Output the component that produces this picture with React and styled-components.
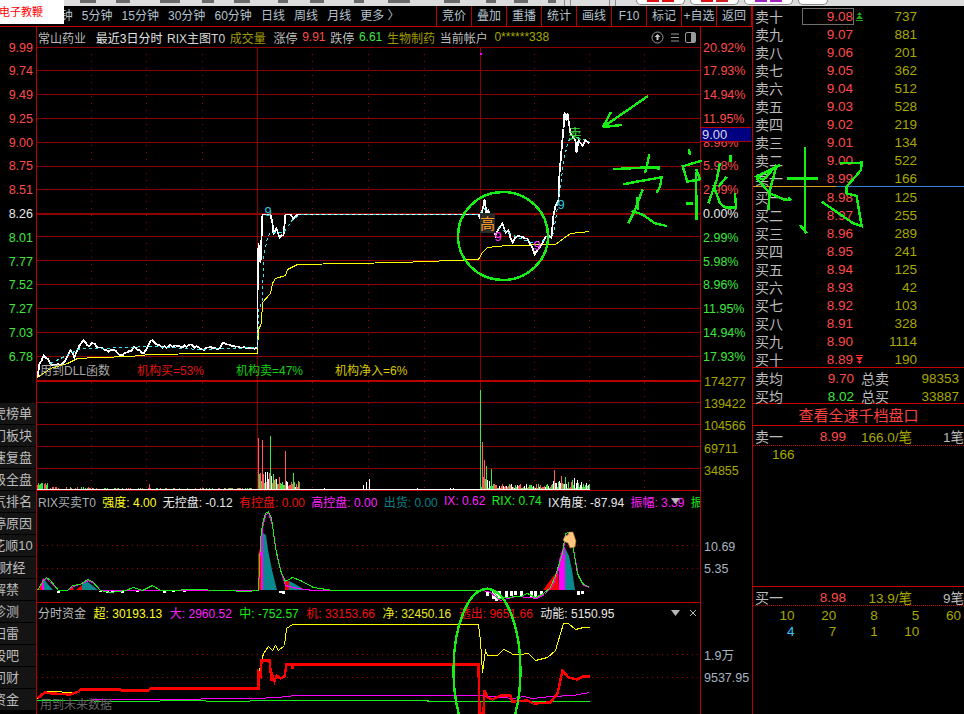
import React from 'react'
import styled, { createGlobalStyle } from 'styled-components'

const RED = '#ff4b4b'
const GREEN = '#3fe63f'
const OLIVE = '#a8a800'
const GREY = '#bcbcbc'
const LINE = '#8c0000'
const EDGE = '#b80000'
const INK = '#16ee16'

const GlobalStyle = createGlobalStyle`
  html, body { margin: 0; padding: 0; background: #000; }
  * { box-sizing: border-box; }
`

const Page = styled.div`
  position: relative;
  width: 964px;
  height: 714px;
  overflow: hidden;
  background: #000;
  color: ${GREY};
  font-family: "Liberation Sans", "Noto Sans CJK SC", sans-serif;
  display: flex;
  flex-direction: column;
`

/* strip of the window above, mostly cut off */
const TopStrip = styled.div`
  height: 6px;
  flex: none;
  display: flex;
  background: #dcdcdc;
  padding-left: 64px;
  overflow: hidden;
`
const TopMark = styled.i`
  display: block;
  flex: none;
  height: ${p => p.$h || 3}px;
  width: ${p => p.$w}px;
  margin-left: ${p => p.$gap}px;
  background: ${p => p.$c || '#6a6a6a'};
`
const TopTab = styled.div`
  flex: none;
  width: ${p => p.$w || 49}px;
  height: 5px;
  margin-left: ${p => p.$gap || 5}px;
  padding: 0 10px;
  display: flex;
  gap: 3px;
  background: #fff;
  border: 1px solid #8a8a8a;
  border-top: 0;
  border-radius: 0 0 6px 6px;
`
const TabInk = styled.i`
  flex: 1;
  height: 2px;
  background: ${p => p.$c};
`

const Workspace = styled.div`
  flex: 1;
  display: flex;
  min-height: 0;
`
const LeftArea = styled.div`
  width: 752px;
  flex: none;
  display: flex;
  flex-direction: column;
`

const Toolbar = styled.div`
  height: 21px;
  flex: none;
  display: flex;
  justify-content: space-between;
  border-bottom: 1px solid #c80000;
  font-size: 12px;
  line-height: 20px;
  color: #b4c0cc;
  white-space: nowrap;
`
const Periods = styled.div`
  display: flex;
  gap: 9.1px;
  padding-left: 42px;
`
const Actions = styled.div`
  display: flex;
`
const ActionButton = styled.div`
  width: 35px;
  text-align: center;
  border-left: 1px solid #b80000;
  &:last-child { border-right: 1px solid #b80000; width: 36px; }
`

const ChartBody = styled.div`
  flex: 1;
  display: flex;
  min-height: 0;
`
const Gutter = styled.div`
  width: 36px;
  flex: none;
  padding-top: 9.5px;
  overflow: hidden;
  display: flex;
  flex-direction: column;
`
const PriceTick = styled.div`
  height: 23.8px;
  flex: none;
  line-height: 23.8px;
  text-align: right;
  padding-right: 3px;
  font-size: 12.5px;
  color: ${p => p.$c};
`
const Tabs = styled.div`
  margin-top: 33px;
  display: flex;
  flex-direction: column;
  gap: 1px;
`
const Tab = styled.div`
  height: 21px;
  flex: none;
  background: #141414;
  font-size: 13px;
  line-height: 21px;
  color: ${GREY};
`
const TabLabel = styled.div`
  width: 12px;
  display: flex;
  justify-content: center;
  white-space: nowrap;
`

const Plots = styled.div`
  width: 665px;
  flex: none;
  display: flex;
  flex-direction: column;
  border-left: 1px solid ${EDGE};
  border-right: 1px solid ${EDGE};
`
const Panel = styled.section`
  position: relative;
  flex: none;
  height: ${p => p.$h}px;
  overflow: hidden;
  border-bottom: ${p => p.$edge || 0}px solid ${EDGE};
`
const PanelHead = styled.div`
  height: ${p => p.$h || 20}px;
  display: flex;
  align-items: center;
  gap: ${p => p.$gap || 5}px;
  padding: 0 1px;
  font-size: 12px;
  white-space: nowrap;
  overflow: hidden;
`
const Text = styled.span`
  flex: none;
  color: ${p => p.$c || GREY};
  margin-left: ${p => p.$ml || 0}px;
`
const HeadTools = styled.div`
  position: absolute;
  top: ${p => p.$top}px;
  right: ${p => p.$right}px;
  display: flex;
  align-items: center;
  gap: ${p => p.$gap}px;
  color: #b8b8b8;
`
const DllRow = styled.div`
  position: absolute;
  left: 3px;
  top: 336px;
  display: flex;
  font-size: 12px;
  line-height: 16px;
  white-space: nowrap;
`
const DllText = styled.span`
  color: ${p => p.$c};
  width: ${p => p.$w}px;
  flex: none;
`
const FutureNote = styled.div`
  position: absolute;
  left: 3px;
  bottom: 2px;
  font-size: 12px;
  color: #666;
`
const PlotSvg = styled.svg`
  display: block;
`

const AxisColumn = styled.div`
  flex: none;
  width: 50px;
  padding-top: 9.5px;
  display: flex;
  flex-direction: column;
  align-items: stretch;
`
const AxisTick = styled.div`
  position: relative;
  flex: none;
  height: ${p => p.$h}px;
  line-height: ${p => p.$h}px;
  padding-left: ${p => p.$pad || 2}px;
  font-size: 12.5px;
  white-space: nowrap;
  color: ${p => p.$c};
`
const AxisGap = styled.div`
  flex: none;
  height: ${p => p.$h}px;
`
const LastPrice = styled.div`
  position: absolute;
  left: 0;
  top: -5px;
  width: 50px;
  height: 15px;
  line-height: 13px;
  padding-left: 1px;
  background: #000080;
  color: #d8d8e8;
  font-size: 13px;
  border-top: 1px solid ${EDGE};
  border-bottom: 1px solid ${EDGE};
`

const Book = styled.aside`
  flex: 1;
  display: flex;
  flex-direction: column;
  border-left: 1px solid ${EDGE};
  font-size: 13.5px;
  white-space: nowrap;
`
const BookRow = styled.div`
  height: 18px;
  flex: none;
  display: grid;
  grid-template-columns: 47px 52px 10px 53px;
  align-items: center;
  padding: 0 0 2px 2px;
`
const BookLabel = styled.span`
  font-size: 14px;
  color: ${GREY};
`
const BookPrice = styled.span`
  height: 17px;
  line-height: 15px;
  text-align: right;
  color: ${RED};
  border: 1px solid ${p => (p.$boxed ? '#6f6f6f' : 'transparent')};
`
const BookVolume = styled.span`
  text-align: right;
  color: ${OLIVE};
`
const Mid = styled.div`
  height: 1px;
  flex: none;
  background: linear-gradient(90deg, #e09a20 0, #e09a20 83px, #2f86d8 83px);
`
const Summary = styled.div`
  height: 37px;
  flex: none;
  border-top: 1px solid #c80000;
  border-bottom: 1px solid #c80000;
`
const SummaryRow = styled.div`
  height: 18px;
  display: grid;
  grid-template-columns: 47px 52px 7px 30px 68px;
  align-items: center;
  padding: 0 0 2px 2px;
`
const SummaryValue = styled.span`
  text-align: right;
  color: ${p => p.$c};
`
const SummaryLabel = styled(BookLabel)`
  grid-column: 4;
`
const FullDepth = styled.div`
  height: 22px;
  flex: none;
  border-bottom: 1px solid #c80000;
  text-align: center;
  font-size: 15px;
  line-height: 22px;
  padding-top: 1px;
  color: #ff4040;
`
const TickRow = styled.div`
  height: 20px;
  flex: none;
  display: grid;
  grid-template-columns: 47px 44px 66px 52px;
  align-items: center;
  padding: 0 0 1px 2px;
  border-top: ${p => (p.$ruled ? '1px solid #c80000' : '0')};
  border-bottom: 1px dotted #c80000;
`
const TickCell = styled.span`
  text-align: right;
  color: ${p => p.$c};
`
const QueueRow = styled.div`
  height: ${p => p.$h || 15}px;
  flex: none;
  display: grid;
  grid-template-columns: repeat(5, 41.6px);
`
const QueueCell = styled.span`
  text-align: right;
  line-height: 15px;
  color: ${p => p.$c || OLIVE};
`
const BookSpacer = styled.div`
  flex: none;
  height: ${p => p.$h}px;
`

/* watermark and hand drawn marks on top of the whole window */
const Badge = styled.div`
  position: absolute;
  left: 0;
  top: 0;
  width: 64px;
  height: 24px;
  background: #fff;
  color: #f00;
  font-size: 11px;
  line-height: 24px;
  white-space: nowrap;
  text-indent: -1px;
`
const InkLayer = styled.svg`
  position: absolute;
  left: 0;
  top: 0;
  pointer-events: none;
`

const line = pts => pts.map(p => p.join(',')).join(' ')

const noise = i => {
  const s = Math.sin(i * 12.9898) * 43758.5453
  return s - Math.floor(s)
}

// fills the flat stretches of a trace with small tick movements
const roughen = (pts, ranges, amp) => {
  const out = []
  pts.forEach((p, i) => {
    const next = pts[i + 1]
    out.push(p)
    if (!next) return
    const busy = ranges.some(([a, b]) => p[0] >= a && next[0] <= b)
    if (!busy) return
    for (let x = p[0] + 2; x < next[0] - 1; x += 2) {
      const t = (x - p[0]) / (next[0] - p[0])
      out.push([x, +(p[1] + (next[1] - p[1]) * t + (noise(x) - 0.5) * amp).toFixed(1)])
    }
  })
  return out
}

const priceLine = roughen([
  [37,377],[39,363],[43,355],[47,358],[50,363],[55,365],[60,364],[65,360],[70,350],[74,357],[79,345],[83,340],[87,345],[94,343],[98,347],[108,351],[115,350],[122,355],[127,352],[135,347],[143,353],[150,340],[155,343],[162,347],[175,345],[182,347],[190,344],[202,349],[208,347],[220,347],[222,342],[227,344],[240,347],[257,347],
  [257,295],[258,243],[260,262],[262,214],[262,232],[262,214],[270,214],[272,223],[273,233],[276,228],[279,237],[283,235],[285,214],[290,214],[293,218],[297,214],[478,214],
  [480,218],[483,205],[484,199],[486,213],[488,210],[490,222],[495,235],[498,228],[502,223],[505,232],[508,230],[512,242],[515,237],[520,236],[527,238],[532,247],[534,254],[539,247],[542,243],[545,236],[551,237],[553,215],[555,205],[558,200],[559,173],[561,150],[563,128],[564,112],[566,120],[567,113],[570,133],[575,140],[576,152],[578,140],[582,145],[585,140],[589,143],
], [[37, 257], [490, 552], [270, 285]], 3)
const avgLine = [
  [50,363],[80,348],[100,348],[150,346],[200,349],[257,347],[258,310],[262,300],[263,257],[267,237],[270,232],[283,232],[293,218],[302,214],
  [478,214],[484,208],[490,222],[500,228],[515,236],[530,242],[545,240],[553,233],[559,193],[563,162],[567,143],[571,135],[589,141],
]
const avgYellow = [
  [37,377],[50,368],[67,363],[77,358],[97,357],[130,356],[150,354],[207,353],[257,353],[257,350],[258,330],[261,322],[262,302],[270,293],[272,283],[275,278],[285,275],[287,269],[293,266],[297,264],[400,262],[478,259],[482,252],[487,247],[507,245],[555,244],[563,238],[570,233],[589,231],
]

const rixGreen = [
  [37,590],[43,580],[46,577],[50,580],[58,590],[67,590],[72,585],[80,584],[87,579],[92,581],[100,590],[110,592],[125,590],[133,587],[142,590],[152,585],[160,590],[172,590],[190,589],[225,590],[245,591],[258,590],[260,540],[262,523],[265,513],[268,511],[271,518],[275,547],[280,570],[285,581],[292,577],[300,580],[313,587],[333,590],[483,590],[487,587],[492,590],[498,598],[503,597],[520,596],[527,593],[535,597],[543,593],[550,587],[555,575],[562,553],[565,533],[568,532],[572,543],[577,573],[582,583],[589,587],
]
const rixMagenta = [
  [37,590],[42,582],[46,578],[52,584],[58,590],[67,590],[73,586],[82,583],[88,580],[94,583],[100,590],[258,590],[260,545],[262,528],[265,515],[268,512],[272,525],[276,553],[281,573],[285,585],[297,588],[313,590],[483,590],[490,592],[500,600],[515,596],[530,597],[536,598],[544,594],[552,586],[557,573],[563,548],[566,535],[569,533],[573,549],[578,576],[583,585],[589,587],
]
const rixFills = [
  { c: '#f00', pts: [[39,590],[42,581],[43,590]] },
  { c: '#ff00ff', pts: [[42,590],[42,580],[44,578],[44,590]] },
  { c: '#0a8a8f', pts: [[44,590],[44,579],[47,583],[53,590]] },
  { c: '#f00', pts: [[68,590],[72,586],[74,590]] },
  { c: '#f00', pts: [[76,590],[82,585],[82,590]] },
  { c: '#0a8a8f', pts: [[82,590],[82,583],[88,582],[98,590]] },
  { c: '#f00', pts: [[258,590],[258,555],[261,545],[261,590]] },
  { c: '#ff00ff', pts: [[261,590],[261,530],[263,526],[263,590]] },
  { c: '#0a8a8f', pts: [[263,590],[263,533],[266,535],[268,550],[270,560],[272,570],[274,578],[277,590]] },
  { c: '#f00', pts: [[285,590],[285,581],[289,581],[289,590]] },
  { c: '#0a8a8f', pts: [[289,590],[289,581],[295,584],[305,590]] },
  { c: '#f00', pts: [[543,590],[558,570],[559,590]] },
  { c: '#ff00ff', pts: [[559,590],[559,560],[563,547],[565,547],[565,590]] },
  { c: '#0a8a8f', pts: [[565,590],[565,548],[569,556],[572,570],[575,590]] },
]
const rixWhite = [[57,1],[99,0],[106,1],[111,0],[121,1],[136,0],[163,1],[172,0],[183,0],[279,1],[282,2],[486,4],[492,7],[495,9],[498,6],[505,5],[510,4],[514,3],[520,4],[530,5],[534,7],[540,3],[577,3],[581,2]]

const capYellow = [
  [37,698],[45,691],[78,692],[82,688],[120,688],[122,690],[148,690],[150,688],[258,688],[259,670],[263,653],[268,646],[272,650],[275,645],[278,650],[284,645],[286,628],[292,624],[478,624],[480,640],[482,672],[485,650],[487,655],[497,655],[503,649],[510,652],[512,654],[520,654],[528,653],[535,660],[547,657],[555,650],[560,633],[563,623],[568,623],[575,629],[583,627],[589,627],
]
const capRed = [
  [37,698],[44,692],[52,693],[70,694],[78,691],[80,689],[120,689],[121,690],[148,690],[150,688],[258,688],[258,672],[260,675],[261,660],[269,660],[271,680],[272,675],[274,681],[276,675],[280,678],[284,676],[286,664],[292,664],[292,668],[293,664],[478,664],[479,713],[483,713],[484,690],[487,697],[492,699],[500,695],[510,695],[512,701],[527,700],[533,703],[550,702],[557,693],[562,670],[568,677],[577,679],[582,676],[589,676],
]
const capMagenta = [
  [37,700],[257,698],[290,696],[291,695],[478,695],[513,698],[523,696],[532,698],[550,696],[573,695],[589,692],
]
const capGreen = [
  [37,700],[150,701],[170,700],[240,701],[260,700],[590,701],
]

const verticals = [
  { x: 91.5 }, { x: 146.5 }, { x: 202.5 }, { x: 257.5, solid: true }, { x: 312.5 }, { x: 368.5 }, { x: 424.5 },
  { x: 480.5, solid: true }, { x: 534.5 }, { x: 589.5 }, { x: 644.5 },
]
const mainRows = [70, 94, 118, 142, 166, 189, 236, 260, 284, 308, 332, 356]
const volumeRows = [402, 424, 446, 468]

const bars = () => {
  const out = []
  const add = (x, h, c) => out.push({ x, h, c })
  for (let x = 37; x < 258; x++) {
    const n = noise(x)
    const c = noise(x + 500) > 0.5 ? '#ff5a5a' : GREEN
    const boost = x < 50 ? 4 : 0
    if (n > 0.25) add(x, 1 + boost + Math.floor(noise(x + 90) * (x < 90 ? 3 : 1.6)), c)
  }
  for (let x = 258; x < 300; x++) {
    const n = noise(x + 30)
    const c = n > 0.66 ? '#ff5a5a' : n > 0.33 ? GREEN : '#fff'
    add(x, Math.floor(3 + noise(x + 70) * (x < 280 ? 16 : 7)), c)
  }
  for (let x = 300; x < 478; x += 3) {
    if (noise(x + 11) > 0.92) add(x, 2, '#fff')
  }
  ;[[258, 52, '#ff5a5a'], [262, 50, '#ff5a5a'], [270, 54, GREEN], [285, 39, '#ff5a5a'], [293, 17, GREEN], [363, 5, '#fff'], [366, 8, '#fff'], [369, 11, '#fff'], [149, 6, '#ff5a5a']].forEach(b => add(...b))
  for (let x = 481; x < 590; x++) {
    const n = noise(x + 200)
    const c = n > 0.66 ? '#ff5a5a' : n > 0.33 ? GREEN : '#fff'
    const top = x < 492 ? 20 : x > 552 ? 12 : 5
    add(x, Math.floor(2 + noise(x + 300) * top), c)
  }
  ;[[480, 100, GREEN], [482, 48, '#ff5a5a'], [484, 30, '#ff5a5a'], [486, 24, GREEN], [554, 20, '#ff5a5a'], [561, 14, '#ff5a5a']].forEach(b => add(...b))
  return out
}
const volumeBars = bars()

const Chart = ({ top, height, children }) => (
  <PlotSvg width={663} height={height} viewBox={`37 ${top} 663 ${height}`}>
    {children}
  </PlotSvg>
)

const Rows = ({ ys, dotted }) => ys.map(y => (
  <line key={y} x1={37} x2={700} y1={y + 0.5} y2={y + 0.5} stroke={dotted ? '#a00000' : LINE} strokeDasharray={dotted ? '1 4' : undefined} />
))

const Columns = ({ from, to }) => verticals.map(v => (
  <line key={v.x} x1={v.x} x2={v.x} y1={from} y2={to} stroke={v.solid ? LINE : '#a00000'} strokeDasharray={v.solid ? undefined : '1 6'} />
))

const Trace = ({ pts, c, w = 1, dash }) => (
  <polyline points={line(pts)} fill='none' stroke={c} strokeWidth={w} strokeDasharray={dash} shapeRendering='crispEdges' transform='translate(0.5 0.5)' />
)

const Mark = ({ x, y, c, size = 13, children }) => (
  <text x={x} y={y} fill={c} fontSize={size} textAnchor='middle' fontFamily='"Liberation Sans", "Noto Sans CJK SC", sans-serif'>{children}</text>
)

const MainChart = () => (
  <Chart top={47} height={333}>
    <line x1={37} x2={700} y1={47.5} y2={47.5} stroke={LINE} />
    <Rows ys={mainRows} />
    <line x1={37} x2={700} y1={214} y2={214} stroke={LINE} strokeWidth={2} />
    <Columns from={47} to={380} />
    <rect x={480} y={53} width={2} height={2} fill='#ff00ff' />
    <Trace pts={avgYellow} c='#ffff00' />
    <Trace pts={priceLine} c='#fff' w={1.8} />
    <Trace pts={avgLine} c='#35e6f5' dash='3 3' />
    <rect x={480} y={213} width={15} height={20} fill='#2a2a2a' />
    <Mark x={487.5} y={229} c='#ff9a1e' size={15}>高</Mark>
    <Mark x={268} y={216} c='#2fc8e0'>9</Mark>
    <Mark x={561} y={209} c='#2fc8e0'>9</Mark>
    <Mark x={498} y={241} c='#ff40ff'>9</Mark>
    <Mark x={537} y={250} c='#ff40ff'>9</Mark>
    <Mark x={575} y={138} c={GREEN}>卖</Mark>
  </Chart>
)

const VolumeChart = () => (
  <Chart top={382} height={108}>
    <Rows ys={volumeRows} />
    <Columns from={382} to={490} />
    {volumeBars.map((b, i) => (
      <rect key={i} x={b.x} y={490 - b.h} width={1} height={b.h} fill={b.c} />
    ))}
    <rect x={37} y={489} width={553} height={1} fill='#fff' />
  </Chart>
)

const RixChart = () => (
  <Chart top={511} height={91}>
    <Rows ys={[545, 568]} dotted />
    {rixFills.map((f, i) => <polygon key={i} points={line(f.pts)} fill={f.c} />)}
    {rixWhite.map(([x, h]) => <rect key={x} x={x} y={591} width={3} height={h + 1} fill='#fff' />)}
    <Trace pts={rixMagenta} c='#ff00ff' />
    <Trace pts={rixGreen} c='#19ee19' />
    <path d='M563 540l2-4 3-1 1-3 4 0 1 3 2 6-1 6-5 1-2-5-3-1z' fill='#ffc680' stroke='#a86a28' strokeWidth={0.6} />
  </Chart>
)

const CapitalChart = () => (
  <Chart top={622} height={92}>
    <Rows ys={[654, 677]} dotted />
    <Trace pts={capMagenta} c='#ff00ff' />
    <Trace pts={capGreen} c='#19ee19' />
    <Trace pts={capYellow} c='#ffff00' />
    <Trace pts={capRed} c='#f00' w={2.5} />
  </Chart>
)

const PanelIcons = () => (
  <svg width='46' height='13' viewBox='0 0 46 13' fill='none' stroke='#9a9a9a'>
    <circle cx='6.5' cy='6.5' r='5.5' />
    <path d='M6.5 3l3 3h-2v3h-2v-3h-2z' fill='#c8c8c8' stroke='none' />
    <path d='M20 3h8M20 6.5h8M20 10h8' />
    <rect x='34.5' y='1.5' width='10' height='10' rx='1.5' />
    <rect x='40' y='2' width='4' height='9' fill='#9a9a9a' stroke='none' />
  </svg>
)

const DownTriangle = () => (
  <svg width='9' height='6' viewBox='0 0 9 6'><path d='M0 0h9L4.5 6z' fill='#b8b8b8' /></svg>
)

const ArrowIcon = styled.svg`
  margin-left: 2px;
`
const BookArrow = ({ c, up }) => (
  <ArrowIcon width='7' height='9' viewBox='0 0 7 9' fill={c}>
    {up
      ? <path d='M3.5 0L6 3H1zM3.5 3L7 7H0zM0 8h7v1H0z' />
      : <path d='M0 0h7v1H0zM0 2h7L3.5 6zM1 6h5L3.5 9z' />}
  </ArrowIcon>
)

const Stat = ({ name, value, c }) => (
  <Text $c={c}>{name}: {value}</Text>
)

const InkMarks = () => {
  const at = pts => pts.map(([x, y]) => [600 + x / 3, 90 + y / 3])
  const strokes = [
    [[40,237],[90,235],[140,232],[175,232],[175,240]],
    [[148,192],[140,230],[135,250]],
    [[70,283],[110,275],[185,262],[180,290],[170,308]],
    [[128,298],[105,360],[85,400]],
    [[95,362],[130,375],[165,400],[200,408]],
    [[110,320],[115,360]],
    [[245,230],[305,212]],
    [[267,178],[270,195]],
    [[248,228],[262,275],[300,268],[290,240],[285,240]],
    [[288,245],[290,390]],
    [[258,340],[278,340]],
    [[360,218],[350,270],[325,340]],
    [[392,195],[392,215]],
    [[355,290],[380,260]],
    [[340,285],[360,340],[375,352],[408,352],[405,310]],
    [[540,225],[470,260],[490,270],[530,225],[510,300],[505,360]],
    [[470,265],[510,310],[550,328],[570,330]],
    [[565,322],[573,332]],
    [[562,266],[655,266]],
    [[615,172],[615,430]],
    [[600,405],[620,430]],
    [[720,220],[785,218],[783,240],[740,290],[740,310],[770,318],[775,350],[785,408],[760,400],[665,335]],
  ]
  return (
    <InkLayer width={964} height={714} fill='none' stroke={INK} strokeWidth={2.4} shapeRendering='crispEdges'>
      <ellipse cx={503} cy={236} rx={45} ry={44} />
      <ellipse cx={487} cy={670} rx={33.5} ry={81} />
      <polyline points='648,96 603,127 622,125' />
      <polyline points='603,127 611,112' />
      {strokes.map((s, i) => <polyline key={i} points={line(at(s))} />)}
    </InkLayer>
  )
}

const periods = ['1分钟', '5分钟', '15分钟', '30分钟', '60分钟', '日线', '周线', '月线', '更多 〉']
const actions = ['竞价', '叠加', '重播', '统计', '画线', 'F10', '标记', '+自选', '返回']

const leftPrices = [
  ['9.99', RED], ['9.74', RED], ['9.49', RED], ['9.25', RED], ['9.00', RED], ['8.75', RED], ['8.51', RED],
  ['8.26', '#e8e8e8'],
  ['8.01', GREEN], ['7.77', GREEN], ['7.52', GREEN], ['7.27', GREEN], ['7.03', GREEN], ['6.78', GREEN],
]
const rightPercents = [
  ['20.92%', RED], ['17.93%', RED], ['14.94%', RED], ['11.95%', RED], ['8.96%', RED], ['5.98%', RED], ['2.99%', RED],
  ['0.00%', '#e8e8e8'],
  ['2.99%', GREEN], ['5.98%', GREEN], ['8.96%', GREEN], ['11.95%', GREEN], ['14.94%', GREEN], ['17.93%', GREEN],
]
const volumeScale = ['174277', '139422', '104566', '69711', '34855']
const tabs = ['龙虎榜单', '热门板块', '快速复盘', '超级全盘', '人气排名', '涨停原因', '同花顺10', '新财经', '解禁', '诊测', '扫雷', '股吧', '问财', '资金']

const asks = [
  ['卖十', '9.08', 737], ['卖九', '9.07', 881], ['卖八', '9.06', 201], ['卖七', '9.05', 362], ['卖六', '9.04', 512],
  ['卖五', '9.03', 528], ['卖四', '9.02', 219], ['卖三', '9.01', 134], ['卖二', '9.00', 522], ['卖一', '8.99', 166],
]
const bids = [
  ['买一', '8.98', 125], ['买二', '8.97', 255], ['买三', '8.96', 289], ['买四', '8.95', 241], ['买五', '8.94', 125],
  ['买六', '8.93', 42], ['买七', '8.92', 103], ['买八', '8.91', 328], ['买九', '8.90', 1114], ['买十', '8.89', 190],
]

const topMarks = [
  [16, 16], [14, 20], [20, 30], [12, 22], [16, 20], [10, 28], [14, 22], [10, 30], [22, 24], [16, 34], [10, 26], [14, 18], [8, 20],
]

const OrderBook = () => (
  <Book>
    {asks.map(([name, price, vol], i) => (
      <BookRow key={name}>
        <BookLabel>{name}</BookLabel>
        <BookPrice $boxed={i === 0}>{price}</BookPrice>
        <span>{i === 0 && <BookArrow c='#1fa51f' up />}</span>
        <BookVolume>{vol}</BookVolume>
      </BookRow>
    ))}
    <Mid />
    {bids.map(([name, price, vol], i) => (
      <BookRow key={name}>
        <BookLabel>{name}</BookLabel>
        <BookPrice>{price}</BookPrice>
        <span>{i === 9 && <BookArrow c='#ff2a2a' />}</span>
        <BookVolume>{vol}</BookVolume>
      </BookRow>
    ))}
    <Summary>
      <SummaryRow>
        <BookLabel>卖均</BookLabel>
        <SummaryValue $c={RED}>9.70</SummaryValue>
        <SummaryLabel>总卖</SummaryLabel>
        <SummaryValue $c={OLIVE}>98353</SummaryValue>
      </SummaryRow>
      <SummaryRow>
        <BookLabel>买均</BookLabel>
        <SummaryValue $c={GREEN}>8.02</SummaryValue>
        <SummaryLabel>总买</SummaryLabel>
        <SummaryValue $c={OLIVE}>33887</SummaryValue>
      </SummaryRow>
    </Summary>
    <FullDepth>查看全速千档盘口</FullDepth>
    <TickRow>
      <BookLabel>卖一</BookLabel>
      <TickCell $c={RED}>8.99</TickCell>
      <TickCell $c={OLIVE}>166.0/笔</TickCell>
      <TickCell $c={GREY}>1笔</TickCell>
    </TickRow>
    <BookSpacer $h={1} />
    <QueueRow $h={15}>
      <QueueCell>166</QueueCell>
    </QueueRow>
    <BookSpacer $h={124} />
    <TickRow $ruled>
      <BookLabel>买一</BookLabel>
      <TickCell $c={RED}>8.98</TickCell>
      <TickCell $c={OLIVE}>13.9/笔</TickCell>
      <TickCell $c={GREY}>9笔</TickCell>
    </TickRow>
    <BookSpacer $h={2} />
    <QueueRow $h={16}>
      {[10, 20, 8, 5, 60].map((n, i) => <QueueCell key={i}>{n}</QueueCell>)}
    </QueueRow>
    <QueueRow>
      <QueueCell $c='#35c8ff'>4</QueueCell>
      <QueueCell>7</QueueCell>
      <QueueCell>1</QueueCell>
      <QueueCell>10</QueueCell>
    </QueueRow>
  </Book>
)

export default function App() {
  return (
    <Page>
      <GlobalStyle />
      <TopStrip>
        {topMarks.map(([w, gap], i) => <TopMark key={i} $w={w} $gap={gap} />)}
        <TopMark $w={1} $gap={8} $h={6} $c='#8a8a8a' />
        <TopMark $w={1} $gap={5} $h={6} $c='#8a8a8a' />
        <TopMark $w={1} $gap={38} $h={6} $c='#8a8a8a' />
        <TopMark $w={1} $gap={5} $h={6} $c='#8a8a8a' />
        <TopTab $gap={20}><TabInk $c='#e01010' /><TabInk $c='#e01010' /></TopTab>
        <TopTab><TabInk $c='#e01010' /><TabInk $c='#d02020' /></TopTab>
        <TopTab><TabInk $c='#a020c0' /><TabInk $c='#a020c0' /></TopTab>
        <TopTab $w={30} />
      </TopStrip>
      <Workspace>
        <LeftArea>
          <Toolbar>
            <Periods>
              {periods.map(p => <span key={p}>{p}</span>)}
            </Periods>
            <Actions>
              {actions.map(a => <ActionButton key={a}>{a}</ActionButton>)}
            </Actions>
          </Toolbar>
          <ChartBody>
            <Gutter>
              {leftPrices.map(([v, c]) => <PriceTick key={v} $c={c}>{v}</PriceTick>)}
              <Tabs>
                {tabs.map(t => (
                  <Tab key={t}><TabLabel>{t}</TabLabel></Tab>
                ))}
              </Tabs>
            </Gutter>
            <Plots>
              <Panel $h={355} $edge={2}>
                <PanelHead $gap={4.7}>
                  <Text>常山药业</Text>
                  <Text $c='#e4e4e4' $ml={5}>最近3日分时</Text>
                  <Text $c='#d8d8d8'>RIX主图T0</Text>
                  <Text $c='#a09a00'>成交量</Text>
                  <Text $ml={3}>涨停</Text>
                  <Text $c={RED}>9.91</Text>
                  <Text>跌停</Text>
                  <Text $c={GREEN}>6.61</Text>
                  <Text $c='#a09a00'>生物制药</Text>
                  <Text>当前帐户</Text>
                  <Text $c={OLIVE} $ml={2}>0******338</Text>
                </PanelHead>
                <HeadTools $top={4} $right={3} $gap={0}><PanelIcons /></HeadTools>
                <MainChart />
                <DllRow>
                  <DllText $c='#a8a8a8' $w={97}>用到DLL函数</DllText>
                  <DllText $c='#e01010' $w={99}>机构买=53%</DllText>
                  <DllText $c='#10d010' $w={99}>机构卖=47%</DllText>
                  <DllText $c='#d8c800' $w={80}>机构净入=6%</DllText>
                </DllRow>
              </Panel>
              <Panel $h={109} $edge={1}>
                <VolumeChart />
              </Panel>
              <Panel $h={112} $edge={1}>
                <PanelHead $gap={6.3}>
                  <Text $c='#a8b0b8'>RIX买卖T0</Text>
                  <Stat name='强度' value='4.00' c='#ffff20' />
                  <Stat name='无控盘' value='-0.12' c='#e8e8e8' />
                  <Stat name='有控盘' value='0.00' c='#f01010' />
                  <Stat name='高控盘' value='0.00' c='#ff20ff' />
                  <Stat name='出货' value='0.00' c='#0a8088' />
                  <Stat name='IX' value='0.62' c='#ff20ff' />
                  <Stat name='RIX' value='0.74' c='#19ee19' />
                  <Stat name='IX角度' value='-87.94' c='#e8e8e8' />
                  <Stat name='振幅' value='3.39' c='#ff20ff' />
                  <Text $c='#19ee19'>振</Text>
                </PanelHead>
                <HeadTools $top={7} $right={20} $gap={0}><DownTriangle /></HeadTools>
                <RixChart />
              </Panel>
              <Panel $h={111}>
                <PanelHead $h={19} $gap={7.5}>
                  <Text>分时资金</Text>
                  <Stat name='超' value='30193.13' c='#ffff20' />
                  <Stat name='大' value='2960.52' c='#ff20ff' />
                  <Stat name='中' value='-752.57' c='#19ee19' />
                  <Stat name='机' value='33153.66' c='#f01010' />
                  <Stat name='净' value='32450.16' c='#e8e820' />
                  <Stat name='透出' value='9651.66' c='#f01010' />
                  <Stat name='动能' value='5150.95' c='#e8e8e8' />
                </PanelHead>
                <HeadTools $top={6} $right={3} $gap={9}>
                  <DownTriangle />
                  <svg width='8' height='8' viewBox='0 0 8 8' stroke='#b8b8b8'><path d='M1 1l6 6M7 1l-6 6' /></svg>
                </HeadTools>
                <CapitalChart />
                <FutureNote>用到未来数据</FutureNote>
              </Panel>
            </Plots>
            <AxisColumn>
              {rightPercents.map(([v, c], i) => (
                <AxisTick key={i} $h={23.8} $c={c}>
                  {v}
                  {i === 4 && <LastPrice>9.00</LastPrice>}
                </AxisTick>
              ))}
              <AxisGap $h={1} />
              {volumeScale.map(v => <AxisTick key={v} $h={22.3} $c={OLIVE} $pad={3}>{v}</AxisTick>)}
              <AxisGap $h={53.5} />
              <AxisTick $h={22} $c='#a8b4c0' $pad={3}>10.69</AxisTick>
              <AxisTick $h={22} $c='#a8b4c0' $pad={3}>5.35</AxisTick>
              <AxisGap $h={65} />
              <AxisTick $h={22} $c='#a8b4c0' $pad={3}>1.9万</AxisTick>
              <AxisTick $h={22} $c='#a8b4c0' $pad={3}>9537.95</AxisTick>
            </AxisColumn>
          </ChartBody>
        </LeftArea>
        <OrderBook />
      </Workspace>
      <Badge>电子教鞭</Badge>
      <InkMarks />
    </Page>
  )
}
